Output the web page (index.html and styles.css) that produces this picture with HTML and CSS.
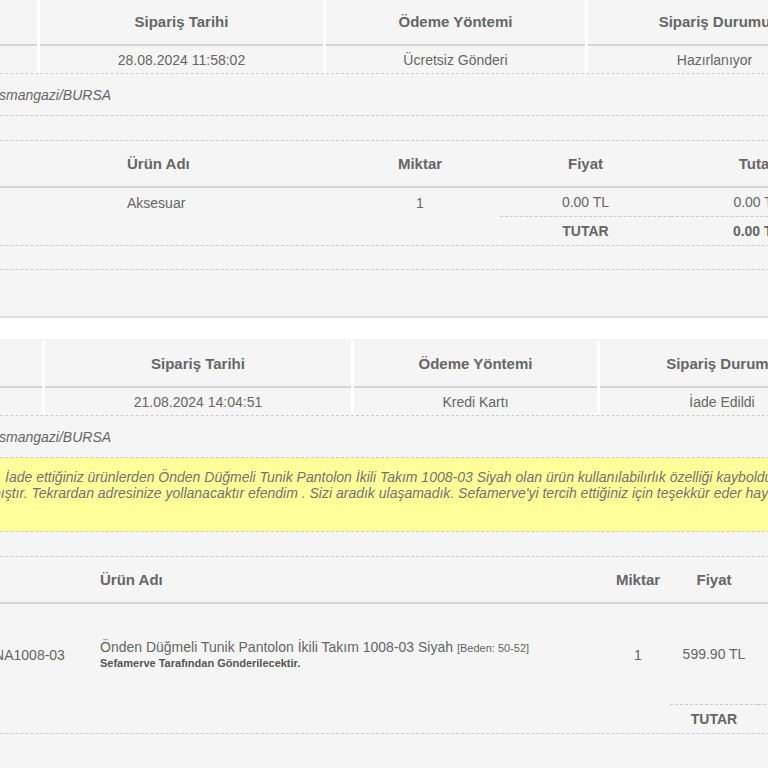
FILE: index.html
```html
<!DOCTYPE html>
<html lang="tr">
<head>
<meta charset="utf-8">
<title>Siparişlerim</title>
<link rel="stylesheet" href="styles.css">
</head>
<body>
<div class="page">
  <section class="order order-1">
    <div class="info info-1">
      <div class="h"></div>
      <div class="h">Sipariş Tarihi</div>
      <div class="h">Ödeme Yöntemi</div>
      <div class="h">Sipariş Durumu</div>
      <div class="d"></div>
      <div class="d">28.08.2024 11:58:02</div>
      <div class="d">Ücretsiz Gönderi</div>
      <div class="d">Hazırlanıyor</div>
    </div>
    <div class="address">Çekirge Mah. Osmangazi/BURSA</div>
    <div class="spacer"></div>
    <div class="items items-1">
      <div class="h"></div>
      <div class="h left">Ürün Adı</div>
      <div class="h">Miktar</div>
      <div class="h">Fiyat</div>
      <div class="h">Tutar</div>
      <div class="c"></div>
      <div class="c left">Aksesuar</div>
      <div class="c">1</div>
      <div class="c sub">0.00 TL</div>
      <div class="c sub">0.00 TL</div>
      <div class="t span3"></div>
      <div class="t strong">TUTAR</div>
      <div class="t strong">0.00 TL</div>
    </div>
    <div class="spacer short"></div>
  </section>

  <section class="order order-2">
    <div class="info info-2">
      <div class="h"></div>
      <div class="h">Sipariş Tarihi</div>
      <div class="h">Ödeme Yöntemi</div>
      <div class="h">Sipariş Durumu</div>
      <div class="d"></div>
      <div class="d">21.08.2024 14:04:51</div>
      <div class="d">Kredi Kartı</div>
      <div class="d">İade Edildi</div>
    </div>
    <div class="address">Çekirge Mah. Osmangazi/BURSA</div>
    <div class="note">Merhaba, İade ettiğiniz ürünlerden Önden Düğmeli Tunik Pantolon İkili Takım 1008-03 Siyah olan ürün kullanılabilırlık özelliği kaybolduğu için<br>iade alınamamıştır. Tekrardan adresinize yollanacaktır efendim . Sizi aradık ulaşamadık. Sefamerve'yi tercih ettiğiniz için teşekkür eder hayırlı günler dileriz.</div>
    <div class="spacer"></div>
    <div class="items items-2">
      <div class="h"></div>
      <div class="h"></div>
      <div class="h left">Ürün Adı</div>
      <div class="h">Miktar</div>
      <div class="h">Fiyat</div>
      <div class="h">Tutar</div>
      <div class="c"></div>
      <div class="c">NA1008-03</div>
      <div class="c product">
        <div class="pname">Önden Düğmeli Tunik Pantolon İkili Takım 1008-03 Siyah <span class="size">[Beden: 50-52]</span></div>
        <div class="seller">Sefamerve Tarafından Gönderilecektir.</div>
      </div>
      <div class="c">1</div>
      <div class="c sub">599.90 TL</div>
      <div class="c sub">599.90 TL</div>
      <div class="t span4"></div>
      <div class="t strong">TUTAR</div>
      <div class="t strong">599.90 TL</div>
    </div>
  </section>
</div>
</body>
</html>
```

FILE: styles.css
```css
html, body {
  margin: 0;
  padding: 0;
}

body {
  background: #ffffff;
  font-family: "Liberation Sans", Arial, sans-serif;
  color: #666666;
  overflow: hidden;
}

.page {
  width: 1100px;
  margin-left: -200px;
  margin-top: -3px;
}

.order {
  background: #f5f5f5;
  padding-top: 2px;
}

.order-1 {
  padding-bottom: 46px;
  border-bottom: 2px solid #dcdcdc;
}

.order-2 {
  margin-top: 21px;
  padding-bottom: 60px;
}

/* order summary grid */
.info {
  display: grid;
  column-gap: 3px;
  justify-content: start;
  background: #ffffff;
  border-bottom: 1px dashed #cccccc;
}

.info-1 {
  grid-template-columns: 237px 283px 259px 253px;
}

.info-2 {
  grid-template-columns: 242px 306px 243px 244px;
}

.info .h {
  box-sizing: border-box;
  height: 47px;
  background: #f5f5f5;
  border-bottom: 2px solid #d4d4d4;
  display: flex;
  align-items: center;
  justify-content: center;
  font-weight: bold;
  font-size: 15px;
}

.info .d {
  height: 27px;
  background: #f5f5f5;
  display: flex;
  align-items: center;
  justify-content: center;
  font-size: 14px;
}

.address {
  height: 41px;
  display: flex;
  align-items: center;
  padding-left: 101px;
  font-style: italic;
  font-size: 14px;
  white-space: nowrap;
  border-bottom: 1px dashed #cccccc;
}

.note {
  background: #ffff99;
  color: #737373;
  font-style: italic;
  font-size: 14px;
  line-height: 16px;
  padding: 11px 0 30px 109px;
  text-indent: 33px;
  white-space: nowrap;
  border-bottom: 1px dashed #cccccc;
}

.spacer {
  height: 24px;
  border-bottom: 1px dashed #cccccc;
}

.spacer.short {
  height: 23px;
}

/* product grid */
.items {
  display: grid;
  justify-content: start;
  border-bottom: 1px dashed #cccccc;
}

.items-1 {
  grid-template-columns: 320px 220px 160px 171px 172px;
  grid-template-rows: 47px 29px 28px;
}

.items-2 {
  grid-template-columns: 166px 127px 513px 64px 88px 142px;
  grid-template-rows: 47px 101px 28px;
}

.items .h {
  box-sizing: border-box;
  border-bottom: 2px solid #d4d4d4;
  display: flex;
  align-items: center;
  justify-content: center;
  font-weight: bold;
  font-size: 15px;
}

.items .c,
.items .t {
  box-sizing: border-box;
  display: flex;
  align-items: center;
  justify-content: center;
  font-size: 14px;
  color: #666666;
  white-space: nowrap;
}

.items .left {
  justify-content: flex-start;
  padding-left: 7px;
}

.items .sub {
  border-bottom: 1px dashed #cccccc;
}

.items .strong {
  font-weight: bold;
}

.span3 {
  grid-column: span 3;
}

.span4 {
  grid-column: span 4;
}

.items .product {
  flex-direction: column;
  align-items: flex-start;
  justify-content: center;
  padding-left: 7px;
}

.pname {
  line-height: 16px;
  font-size: 14px;
}

.size {
  font-size: 11px;
}

.seller {
  line-height: 14px;
  font-size: 11px;
  font-weight: bold;
  color: #555555;
}
```
